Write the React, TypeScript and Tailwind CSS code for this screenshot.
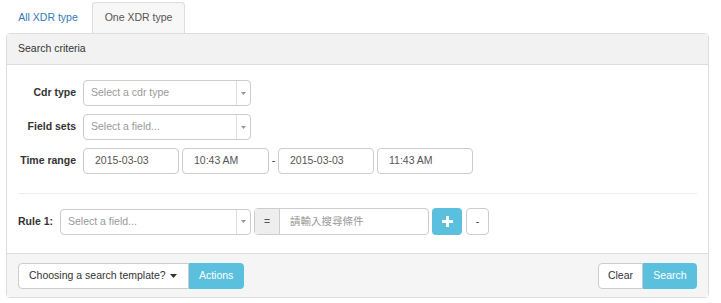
import React from "react";

const Select = ({ placeholder, w }: { placeholder: string; w: string }) => (
  <div className={`flex h-[26px] items-stretch rounded-[4px] border border-[#ccc] bg-white pl-[7px] ${w}`}>
    <span className="flex flex-1 items-center whitespace-nowrap text-[#999]">{placeholder}</span>
    <span className="flex w-[14px] items-center justify-center border-l border-[#ddd]">
      <svg width="5" height="3" viewBox="0 0 5 3"><path d="M0 0h5L2.5 3z" fill="#999" /></svg>
    </span>
  </div>
);

const Input = ({ value, w }: { value: string; w: string }) => (
  <div className={`flex h-[26px] shrink-0 items-center whitespace-nowrap rounded-[4px] border border-[#ccc] bg-white pl-[11px] text-[#555] ${w}`}>
    {value}
  </div>
);

export default function App() {
  return (
    <div className="h-[303px] w-[721px] bg-white text-[10.5px] text-[#333]" style={{ fontFamily: '"Liberation Sans", Arial, "Noto Sans CJK TC", sans-serif' }}>
      <div className="flex pl-[6px] pt-[2px]">
        <div className="flex h-[31px] w-[84px] items-center justify-center whitespace-nowrap text-[#337ab7]">All XDR type</div>
        <div className="ml-[2px] flex h-[31px] w-[93px] items-center justify-center whitespace-nowrap rounded-t-[4px] border border-b-0 border-[#ddd] bg-[#f7f7f7] text-[#555]">One XDR type</div>
      </div>
      <div className="ml-[6px] w-[703px] rounded-[4px] border border-[#ddd]">
        <div className="flex h-[31px] items-center border-b border-[#ddd] bg-[#f2f2f2] pl-[11px] text-[#333]">Search criteria</div>
        <div className="bg-white px-[11px] pt-[15px]">
          <div className="flex flex-col gap-[8px]">
            <div className="flex items-center">
              <div className="w-[58px] shrink-0 whitespace-nowrap text-right font-bold">Cdr type</div>
              <div className="ml-[7px]"><Select placeholder="Select a cdr type" w="w-[168px]" /></div>
            </div>
            <div className="flex items-center">
              <div className="w-[58px] shrink-0 whitespace-nowrap text-right font-bold">Field sets</div>
              <div className="ml-[7px]"><Select placeholder="Select a field..." w="w-[168px]" /></div>
            </div>
            <div className="flex items-center">
              <div className="w-[58px] shrink-0 whitespace-nowrap text-right font-bold">Time range</div>
              <div className="ml-[7px] flex items-center">
                <Input value="2015-03-03" w="w-[96px]" />
                <div className="ml-[3px]"><Input value="10:43 AM" w="w-[87px]" /></div>
                <div className="w-[9px] text-center">-</div>
                <Input value="2015-03-03" w="w-[96px]" />
                <div className="ml-[3px]"><Input value="11:43 AM" w="w-[96px]" /></div>
              </div>
            </div>
          </div>
          <div className="mt-[19px] border-t border-[#eee]" />
          <div className="flex items-center pb-[18px] pt-[14px]">
            <div className="w-[35px] shrink-0 whitespace-nowrap text-right font-bold">Rule 1:</div>
            <div className="ml-[7px]"><Select placeholder="Select a field..." w="w-[191px]" /></div>
            <div className="ml-[3px] flex h-[27px] w-[175px] rounded-[4px] border border-[#ccc] bg-white">
              <div className="flex w-[25px] items-center justify-center border-r border-[#ccc] bg-[#eee] text-[#555]">=</div>
              <div className="flex items-center whitespace-nowrap pl-[10px] text-[#999]">請輸入搜尋條件</div>
            </div>
            <div className="ml-[3px] flex h-[27px] w-[30px] items-center justify-center rounded-[4px] bg-[#5bc0de]">
              <svg width="11" height="11" viewBox="0 0 11 11"><path d="M4 0h3v4h4v3H7v4H4V7H0V4h4z" fill="#fff" /></svg>
            </div>
            <div className="ml-[4px] flex h-[27px] w-[23px] items-center justify-center rounded-[4px] border border-[#ccc] bg-white text-[#333]">-</div>
          </div>
        </div>
        <div className="flex h-[44px] items-center justify-between border-t border-[#ddd] bg-[#f5f5f5] px-[11px]">
          <div className="flex h-[26px]">
            <div className="flex items-center whitespace-nowrap rounded-l-[4px] border border-[#ccc] bg-white pl-[10px] pr-[11px] text-[#333]">
              Choosing a search template?
              <svg className="ml-[4px]" width="7" height="4" viewBox="0 0 7 4"><path d="M0 0h7L3.5 4z" fill="#333" /></svg>
            </div>
            <div className="flex w-[55px] items-center justify-center rounded-r-[4px] bg-[#5bc0de] text-white">Actions</div>
          </div>
          <div className="flex h-[26px]">
            <div className="flex w-[45px] items-center justify-center rounded-l-[4px] border border-[#ccc] bg-white text-[#333]">Clear</div>
            <div className="flex w-[54px] items-center justify-center rounded-r-[4px] bg-[#5bc0de] text-white">Search</div>
          </div>
        </div>
      </div>
    </div>
  );
}
